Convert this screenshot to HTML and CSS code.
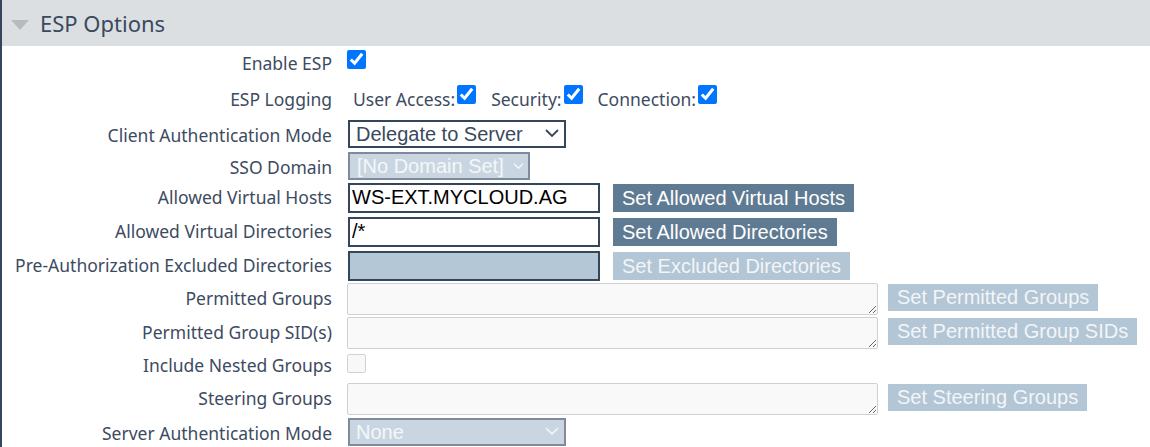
FILE: index.html
```html
<!DOCTYPE html>
<html>
<head>
<meta charset="utf-8">
<link rel="stylesheet" href="styles.css">
</head>
<body>
<div class="panel">
  <div class="header">
    <svg class="caret" width="18" height="10" viewBox="0 0 18 10"><polygon points="0,0 18,0 9,10" fill="#b6bbc0"/></svg>
    <span class="title">ESP Options</span>
  </div>
  <div class="form">
    <div class="row r1">
      <label class="lbl">Enable ESP</label>
      <div class="ctl"><input type="checkbox" class="cb" checked></div>
    </div>
    <div class="row r2">
      <label class="lbl">ESP Logging</label>
      <div class="ctl logging">
        <span class="opt">User Access:<input type="checkbox" class="cb" checked></span>
        <span class="opt">Security:<input type="checkbox" class="cb" checked></span>
        <span class="opt">Connection:<input type="checkbox" class="cb" checked></span>
      </div>
    </div>
    <div class="row r3">
      <label class="lbl">Client Authentication Mode</label>
      <div class="ctl"><span class="selwrap"><select class="sel sel-wide"><option>Delegate to Server</option></select><svg class="chev" width="14" height="8" viewBox="0 0 14 8"><polyline points="1,1 7,7 13,1" fill="none" stroke="#34465c" stroke-width="1.8"/></svg></span></div>
    </div>
    <div class="row r4">
      <label class="lbl">SSO Domain</label>
      <div class="ctl"><span class="selwrap"><select class="sel sel-off sel-sso" disabled><option>[No Domain Set]</option></select><svg class="chev chev-sm" width="11" height="6" viewBox="0 0 11 6"><polyline points="1,0.8 5.5,5.2 10,0.8" fill="none" stroke="#f2f6f9" stroke-width="1.5"/></svg></span></div>
    </div>
    <div class="row r5">
      <label class="lbl">Allowed Virtual Hosts</label>
      <div class="ctl"><input type="text" class="txt" value="WS-EXT.MYCLOUD.AG"><button class="btn">Set Allowed Virtual Hosts</button></div>
    </div>
    <div class="row r6">
      <label class="lbl">Allowed Virtual Directories</label>
      <div class="ctl"><input type="text" class="txt" value="/*"><button class="btn">Set Allowed Directories</button></div>
    </div>
    <div class="row r7">
      <label class="lbl">Pre-Authorization Excluded Directories</label>
      <div class="ctl"><input type="text" class="txt txt-off" disabled><button class="btn btn-off" disabled>Set Excluded Directories</button></div>
    </div>
    <div class="row r8">
      <label class="lbl">Permitted Groups</label>
      <div class="ctl"><textarea class="ta" disabled></textarea><button class="btn btn-off btn-ta" disabled>Set Permitted Groups</button></div>
    </div>
    <div class="row r9">
      <label class="lbl">Permitted Group SID(s)</label>
      <div class="ctl"><textarea class="ta" disabled></textarea><button class="btn btn-off btn-ta" disabled>Set Permitted Group SIDs</button></div>
    </div>
    <div class="row r10">
      <label class="lbl">Include Nested Groups</label>
      <div class="ctl"><input type="checkbox" class="cb" disabled></div>
    </div>
    <div class="row r11">
      <label class="lbl">Steering Groups</label>
      <div class="ctl"><textarea class="ta" disabled></textarea><button class="btn btn-off btn-ta" disabled>Set Steering Groups</button></div>
    </div>
    <div class="row r12">
      <label class="lbl">Server Authentication Mode</label>
      <div class="ctl"><span class="selwrap"><select class="sel sel-off sel-wide" disabled><option>None</option></select><svg class="chev" width="14" height="8" viewBox="0 0 14 8"><polyline points="1,1 7,7 13,1" fill="none" stroke="#f2f6f9" stroke-width="1.6"/></svg></span></div>
    </div>
  </div>
</div>
</body>
</html>
```
FILE: styles.css
```css
html, body {
  margin: 0;
  padding: 0;
  background: #ffffff;
  overflow: hidden;
}
.panel {
  border-left: 2px solid #34465c;
  width: 1148px;
  height: 447px;
  font-family: "Noto Sans", sans-serif;
  color: #3b4a5e;
}
.header {
  height: 46px;
  background: #dcdfe1;
  display: flex;
  align-items: center;
}
.caret {
  margin-left: 9px;
  margin-top: 3px;
}
.title {
  margin-left: 11px;
  font-size: 22px;
  color: #3a4a5e;
}
.form {
  display: flex;
  flex-direction: column;
}
.row {
  display: flex;
  align-items: center;
}
.lbl {
  width: 330px;
  flex: none;
  text-align: right;
  font-size: 17.5px;
  color: #3d4b5f;
  padding-bottom: 2px;
}
.ctl {
  margin-left: 16px;
  display: flex;
  align-items: center;
}
.r1 { height: 35px; }
.r2 { height: 35px; margin-top: 1px; }
.r3 { height: 33px; }
.r4 { height: 31px; }
.r5 { height: 33px; }
.r6 { height: 35px; }
.r7 { height: 33px; }
.r8 { height: 33px; }
.r9 { height: 35px; }
.r10 { height: 32px; }
.r11 { height: 33px; }
.r12 { height: 34px; }
.r3 .lbl, .r4 .lbl, .r12 .lbl { padding-top: 2px; padding-bottom: 0; }
.cb {
  width: 19px;
  height: 19px;
  margin: 0 0 8px -1px;
}
.r10 .cb { margin-bottom: 6px; }
.logging {
  margin-left: 21px;
  font-size: 17.5px;
  color: #3d4b5f;
}
.opt {
  display: flex;
  align-items: center;
  margin-right: 15px;
  padding-bottom: 2px;
}
.opt .cb { margin-left: 2px; margin-bottom: 8px; }
.selwrap {
  position: relative;
  display: flex;
}
.chev {
  position: absolute;
  right: 7px;
  top: 9px;
  pointer-events: none;
}
.chev-sm {
  right: 6px;
  top: 11px;
}
.sel {
  -webkit-appearance: none;
  appearance: none;
  font-family: "Liberation Sans", Arial, sans-serif;
  font-size: 20px;
  height: 28px;
  border: 2px solid #34465c;
  background: #ffffff;
  color: #3a4a5e;
  border-radius: 0;
  padding: 0 6px;
  margin: 0;
}
.sel-wide { width: 218px; }
.sel-sso { width: 182px; padding-left: 7px; }
.sel-off {
  background: #c9d6e1;
  border-color: #7d8b9c;
  color: #f4f7fa;
  opacity: 1;
}
.txt {
  font-family: "Liberation Sans", Arial, sans-serif;
  font-size: 20px;
  width: 252px;
  height: 30px;
  box-sizing: border-box;
  border: 2px solid #34465c;
  background: #ffffff;
  color: #000000;
  padding: 0 2px;
  margin: 0;
  border-radius: 0;
}
.txt-off {
  background: #b4c7d6;
}
.btn {
  font-family: "Liberation Sans", Arial, sans-serif;
  font-size: 20px;
  height: 28px;
  margin: 0 0 0 13px;
  padding: 0 9px;
  border: none;
  border-radius: 0;
  background: #5f7b93;
  color: #ffffff;
  line-height: 28px;
}
.btn-off {
  background: #b3c6d5;
  color: #f2f5f8;
}
.btn-ta {
  margin-left: 10px;
  height: 27px;
  line-height: 27px;
  align-self: flex-start;
  margin-top: 1px;
}
.ta {
  width: 531px;
  height: 32px;
  box-sizing: border-box;
  border: 1px solid #d0d0d0;
  border-radius: 2px;
  background: #f9f9f9;
  margin: 0 0 0 -1px;
  padding: 2px;
  resize: both;
}
```
